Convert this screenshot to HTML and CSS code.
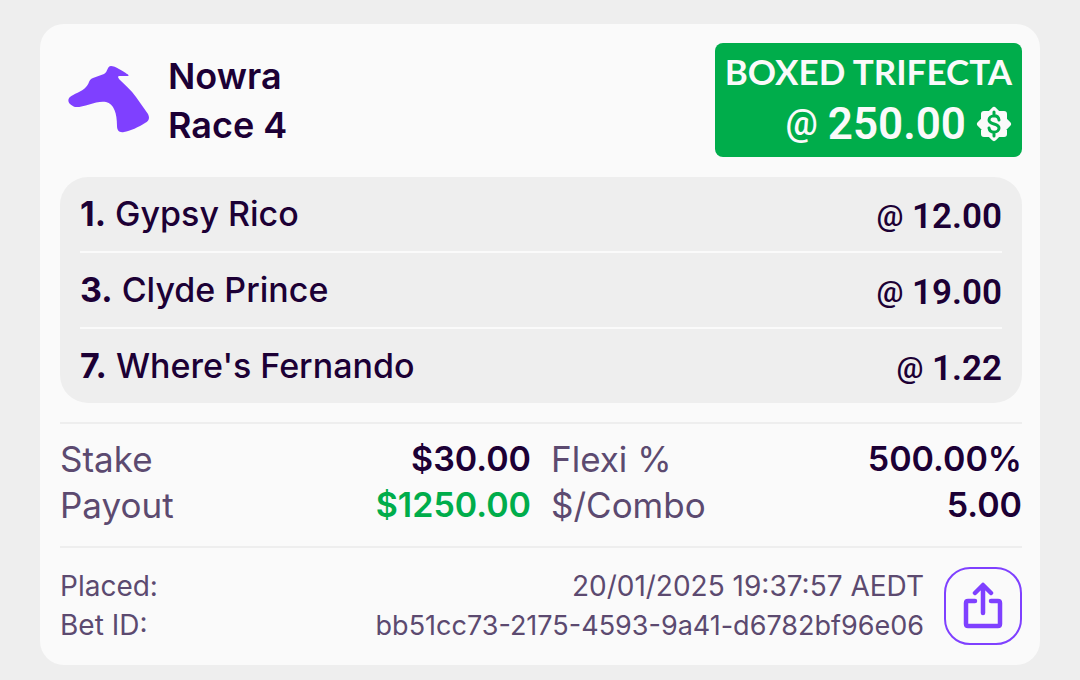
FILE: index.html
```html
<!DOCTYPE html>
<html lang="en">
<head>
    <meta charset="UTF-8">
    <meta name="viewport" content="width=device-width, initial-scale=1.0">
    <title>Nowra Race 4</title>
    <link rel="stylesheet" href="styles.css">
</head>
<body>
    <main class="card">
        <header class="header">
            <svg class="dog" viewBox="0 0 82 68" aria-hidden="true">
                <path fill="#7f40ff" d="M2 31 C5 28 14 26 18 21 C22 17 20 14 25 12 L36 8 C40 6 39 0 43 0 C47 0 55 5 59 8 C61 9 61 10 59 10 L52 10 C49 10 50 12 52 14 C57 19 63 24 68 31 L80 48 C82 52 81 55 77 57 C71 61 62 65 56 66 C51 67 49 64 49 60 C49 47 46 38 38 36 C29 34 15 42 7 41 C2 39 -2 35 2 31 Z"/>
            </svg>
            <h1 class="race">Nowra<br>Race 4</h1>
            <div class="betType">
                <div class="betName">BOXED TRIFECTA</div>
                <div class="betOdds">
                    <span class="betAt">@</span>
                    <span>250.00</span>
                    <svg class="promo" viewBox="0 0 36 36" aria-hidden="true">
                        <path fill="#fafafa" stroke="#fafafa" stroke-width="6" stroke-linejoin="round" d="M18 4 L22 8 L28 8 L28 14 L32 18 L28 22 L28 28 L22 28 L18 32 L14 28 L8 28 L8 22 L4 18 L8 14 L8 8 L14 8 Z"/>
                        <path fill="none" stroke="#00ad4b" stroke-width="3" stroke-linecap="round" d="M23 14 C22 8 13 9 13 14 C13 19 23 17 23 22 C23 27 14 28 13 22 M18 6 V10 M18 26 V30"/>
                    </svg>
                </div>
            </div>
        </header>

        <ul class="runners">
            <li class="runner">
                <span class="runnerName"><b>1.</b> Gypsy Rico</span>
                <span class="odds"><span class="at">@</span> 12.00</span>
            </li>
            <li class="runner">
                <span class="runnerName"><b>3.</b> Clyde Prince</span>
                <span class="odds"><span class="at">@</span> 19.00</span>
            </li>
            <li class="runner">
                <span class="runnerName"><b>7.</b> Where's Fernando</span>
                <span class="odds"><span class="at">@</span> 1.22</span>
            </li>
        </ul>

        <dl class="stats">
            <div class="stat"><dt>Stake</dt><dd>$30.00</dd></div>
            <div class="stat"><dt>Flexi %</dt><dd>500.00%</dd></div>
            <div class="stat"><dt>Payout</dt><dd class="payout">$1250.00</dd></div>
            <div class="stat"><dt>$/Combo</dt><dd>5.00</dd></div>
        </dl>

        <footer class="footer">
            <dl class="details">
                <div class="detail"><dt>Placed:</dt><dd>20/01/2025 19:37:57 AEDT</dd></div>
                <div class="detail"><dt>Bet ID:</dt><dd class="betId">bb51cc73-2175-4593-9a41-d6782bf96e06</dd></div>
            </dl>
            <button class="share" type="button" aria-label="Share">
                <svg class="shareIcon" viewBox="0 0 40 48" aria-hidden="true">
                    <path fill="none" stroke="#7f40ff" stroke-width="4.5" stroke-linecap="round" stroke-linejoin="round" d="M12 19 H5 Q3 19 3 21 V42 Q3 44 5 44 H35 Q37 44 37 42 V21 Q37 19 35 19 H28 M20 31 V4 M12 11 L20 3 L28 11"/>
                </svg>
            </button>
        </footer>
    </main>
</body>
</html>
```
FILE: styles.css
```css
body {
    margin: 0;
    padding: 24px 40px 16px;
    background-color: #eeeeee;
    color: #1c0035;
    font-family: Inter, "Liberation Sans", sans-serif;
}

.card {
    padding: 19px 18px 20px 20px;
    border-radius: 24px;
    background-color: #fafafa;
}

.header {
    display: flex;
    align-items: center;
}

.dog {
    width: 82px;
    height: 68px;
    margin: 0 18px 0 8px;
}

.race {
    margin: 2px 0 0;
    font-size: 36px;
    font-weight: 600;
    line-height: 49px;
}

.betType {
    margin-left: auto;
    padding: 2px 10px 6px;
    border-radius: 8px;
    background-color: #00ad4b;
    color: #fafafa;
}

.betName {
    font-family: Lato, sans-serif;
    font-size: 35px;
    font-weight: 700;
    line-height: 52px;
}

.betOdds {
    display: flex;
    justify-content: flex-end;
    align-items: center;
    gap: 10px;
    font-family: Roboto, sans-serif;
    font-size: 44px;
    font-weight: 600;
    line-height: 54px;
}

.betAt {
    padding-bottom: 2px;
    font-size: 36px;
    font-weight: 500;
    line-height: 52px;
}

.promo {
    width: 36px;
    height: 36px;
}

.runners {
    margin: 20px 0 0;
    padding: 0 20px;
    border-radius: 28px;
    background-color: #eeeeee;
    list-style: none;
}

.runner {
    display: flex;
    justify-content: space-between;
    line-height: 74px;
}

.runner + .runner {
    border-top: 2px solid #fafafa;
}

.runnerName {
    font-size: 34px;
    font-weight: 500;
}

.runnerName b {
    font-weight: 700;
}

.odds {
    padding-top: 6px;
    font-family: Roboto, sans-serif;
    font-size: 35px;
    font-weight: 600;
    line-height: 68px;
}

.at {
    font-size: 30px;
    font-weight: 500;
    line-height: 1;
    vertical-align: 2px;
}

.stats {
    display: grid;
    grid-template-columns: 1fr 1fr;
    column-gap: 20px;
    margin: 19px 0 0;
    padding: 12px 0 18px;
    border-top: 2px solid #eeeeee;
}

.stat {
    display: flex;
    justify-content: space-between;
    line-height: 46px;
}

.stat dt {
    color: #5c4a70;
    font-size: 35px;
}

.stat dd {
    margin: 0;
    font-size: 34px;
    font-weight: 600;
}

.stat .payout {
    color: #00ad4b;
}

.footer {
    display: flex;
    gap: 20px;
    padding-top: 19px;
    border-top: 2px solid #eeeeee;
}

.details {
    flex: 1;
    margin: 0;
}

.detail {
    display: flex;
    justify-content: space-between;
    color: #5c4a70;
    font-size: 28px;
    line-height: 39px;
}

.detail dd {
    margin: 0;
}

.detail .betId {
    font-size: 27px;
}

.share {
    display: flex;
    align-items: center;
    justify-content: center;
    width: 78px;
    height: 78px;
    padding: 0;
    border: 2px solid #7f40ff;
    border-radius: 26px;
    background: none;
    cursor: pointer;
}

.shareIcon {
    width: 40px;
    height: 48px;
}
```
